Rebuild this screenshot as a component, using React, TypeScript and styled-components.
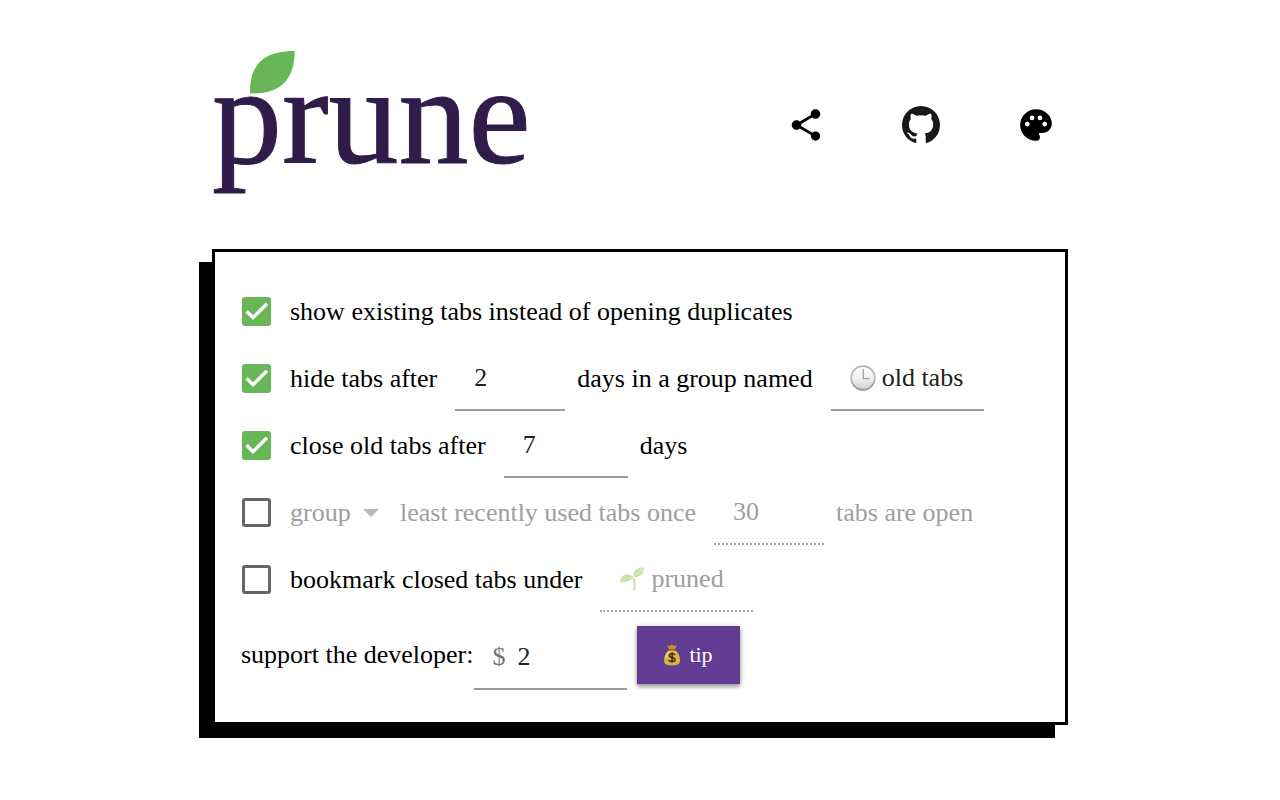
import React, { useState } from 'react';
import styled, { createGlobalStyle } from 'styled-components';

const GlobalStyle = createGlobalStyle`
  * { box-sizing: border-box; }
  body {
    margin: 0;
    background: #fff;
    color: #000;
    font-family: 'Liberation Serif', 'Times New Roman', serif;
    font-size: 26px;
    line-height: 30px;
  }
  input, select, button { font: inherit; color: inherit; }
`;

const Page = styled.div`
  max-width: 904px;
  margin: 0 auto;
  padding: 0 24px 64px;
`;

const Header = styled.header`
  display: flex;
  align-items: center;
  justify-content: space-between;
  padding: 50px 0;
`;

const Logo = styled.svg`
  display: block;
  width: 324px;
  height: 149px;
  overflow: visible;
`;

const Actions = styled.nav`
  display: flex;
  gap: 51px;
`;

const actionStyle = `
  display: flex;
  align-items: center;
  justify-content: center;
  width: 64px;
  height: 64px;
  padding: 0;
  border: 0;
  background: none;
  cursor: pointer;
`;

const ActionButton = styled.button`${actionStyle}`;
const ActionLink = styled.a`${actionStyle}`;

const ActionIcon = styled.svg`
  display: block;
  width: 38px;
  height: 38px;
`;

const Card = styled.main`
  border: 3px solid #000;
  box-shadow: -13px 13px 0 #000;
  padding: 26px 26px 38px;
`;

const Row = styled.div<{ $muted?: boolean }>`
  display: flex;
  align-items: center;
  height: 67px;
  white-space: nowrap;
  color: ${(p) => (p.$muted ? '#9e9e9e' : '#000')};
`;

const SupportRow = styled(Row)`
  height: 58px;
  margin-top: 13px;
`;

const CheckWrap = styled.span`
  position: relative;
  flex: none;
  width: 29px;
  height: 29px;
  margin: 0 19px 0 1px;
`;

const CheckInput = styled.input`
  appearance: none;
  display: block;
  width: 29px;
  height: 29px;
  margin: 0;
  border: 3px solid #666;
  border-radius: 3px;
  cursor: pointer;
  &:checked {
    background: #68b658;
    border-color: #68b658;
  }
`;

const CheckMark = styled.svg`
  position: absolute;
  inset: 0;
  width: 29px;
  height: 29px;
  pointer-events: none;
`;

const Field = styled.span<{ $width: number; $disabled?: boolean }>`
  display: flex;
  align-items: center;
  flex: none;
  width: ${(p) => p.$width}px;
  height: 64px;
  margin: 0 12px 0 18px;
  padding-left: 19px;
  border-bottom: ${(p) => (p.$disabled ? '2px dotted #a6a6a6' : '2px solid #9e9e9e')};
  color: ${(p) => (p.$disabled ? '#9e9e9e' : '#212121')};
`;

const TipField = styled(Field)`
  margin: 6px 10px 0 0;
`;

const FieldInput = styled.input`
  flex: 1;
  min-width: 0;
  width: 100%;
  height: 30px;
  padding: 0;
  border: 0;
  outline: 0;
  background: none;
  &:disabled { color: #9e9e9e; }
`;

const Prefix = styled.span`
  margin-right: 12px;
  color: #757575;
`;

const Emoji = styled.svg<{ $faded?: boolean }>`
  display: block;
  flex: none;
  width: 26px;
  height: 26px;
  margin-right: 6px;
  opacity: ${(p) => (p.$faded ? 0.45 : 1)};
`;

const SelectWrap = styled.span`
  display: flex;
  align-items: center;
  margin-right: 21px;
`;

const Select = styled.select`
  appearance: none;
  height: 30px;
  margin: 0 -16px 0 0;
  padding: 0 28px 0 0;
  border: 0;
  background: none;
  opacity: 1;
  &:disabled { color: #9e9e9e; opacity: 1; }
`;

const Caret = styled.svg`
  display: block;
  width: 16px;
  height: 8px;
  pointer-events: none;
`;

const TipButton = styled.button`
  display: flex;
  align-items: center;
  justify-content: center;
  width: 103px;
  height: 58px;
  padding: 0;
  border: 0;
  background: #613c90;
  color: #fff;
  font-size: 22px;
  box-shadow: 0 3px 4px rgba(0, 0, 0, 0.3), 0 1px 6px rgba(0, 0, 0, 0.2);
  cursor: pointer;
`;

const MoneyIcon = styled.svg`
  display: block;
  width: 18px;
  height: 22px;
  margin-right: 8px;
`;

function Check({ id, initial, label }: { id: string; initial?: boolean; label?: string }) {
  const [on, setOn] = useState(!!initial);
  return (
    <CheckWrap>
      <CheckInput
        type="checkbox"
        id={id}
        aria-label={label}
        checked={on}
        onChange={(e) => setOn(e.target.checked)}
      />
      {on && (
        <CheckMark viewBox="0 0 29 29" aria-hidden="true">
          <path d="M4.6 14.2 11 20.6 25 6.8" fill="none" stroke="#fff" strokeWidth="3.4" />
        </CheckMark>
      )}
    </CheckWrap>
  );
}

const Clock = () => (
  <Emoji viewBox="0 0 26 26" aria-hidden="true">
    <defs>
      <linearGradient id="rim" x1="0" y1="0" x2="0" y2="1">
        <stop offset="0" stopColor="#aab2c0" />
        <stop offset="0.5" stopColor="#b9babd" />
        <stop offset="1" stopColor="#8d8d8d" />
      </linearGradient>
      <linearGradient id="face" x1="0" y1="0" x2="0" y2="1">
        <stop offset="0" stopColor="#fafafa" />
        <stop offset="0.5" stopColor="#f1f1f1" />
        <stop offset="1" stopColor="#cfcfcf" />
      </linearGradient>
    </defs>
    <circle cx="13" cy="13" r="11.8" fill="url(#face)" stroke="url(#rim)" strokeWidth="1.7" />
    <path d="M13.3 4v9.600h6" fill="none" stroke="#a2a2a2" strokeWidth="1.3" />
  </Emoji>
);

const Seedling = () => (
  <Emoji viewBox="0 0 26 26" aria-hidden="true" $faded>
    <path d="M14.2 11.5c1.8 4 1.7 8.5.6 13.2" fill="none" stroke="#7fbf4a" strokeWidth="1.8" />
    <path d="M14.5 10.8C7.5 6 1.8 9 1 16.5c5.5-.2 10-1.5 13.5-5.7z" fill="#74bb40" />
    <path d="M14.3 11C13.6 4.5 17.5 1.8 25.2 1.3 24.8 8.5 21 11.7 14.3 11z" fill="#82c84d" />
    <path d="M2 15.5c4-1.5 7.5-4 12-4.5 3.5-2.5 6.5-4.5 10-8.5" fill="none" stroke="#a5d977" strokeWidth="1" />
  </Emoji>
);

const MoneyBag = () => (
  <MoneyIcon viewBox="0 0 18 22" aria-hidden="true">
    <path d="M4 1.2 6.5 2 8.8.6 11.2 2 14 1.2 11.8 5.5H6.3z" fill="#c9962d" />
    <path d="M6.2 6C2.5 8.5.8 12.5 1 17c.2 3.2 2.5 4.4 8 4.4s7.8-1.2 8-4.4c.2-4.5-1.5-8.5-5.2-11z" fill="#dfb03c" />
    <path d="M3 14c.5-3.5 2-5.5 4-7" fill="none" stroke="#f3d571" strokeWidth="1.5" />
    <path d="M5.5 5.8h7" stroke="#926315" strokeWidth="1.5" />
    <path d="M12 10.8C10.5 9.4 6.3 9.3 6.3 11.6c0 2.6 5.7 1.4 5.7 4.1 0 2.3-4.5 2.3-6.3.6M9.1 8.2v10.5" fill="none" stroke="#33312c" strokeWidth="1.6" />
  </MoneyIcon>
);

export default function App() {
  return (
    <>
      <GlobalStyle />
      <Page>
        <Header>
          <Logo viewBox="0 0 324 149" role="img" aria-label="prune">
            <text
              x="0"
              y="113"
              fill="#2f1c4a"
              stroke="#2f1c4a"
              strokeWidth="1"
              fontFamily="'Liberation Serif', serif"
              fontSize="140"
            >
              prune
            </text>
            <path d="M38 43.5C37.5 16 50 1 82.7 1 82.5 30 68 44.5 38 43.5z" fill="#68b658" />
          </Logo>
          <Actions>
            <ActionButton type="button" aria-label="share">
              <ActionIcon viewBox="0 0 24 24" fill="#000">
                <path d="M18 16.08c-.76 0-1.44.3-1.96.77L8.91 12.7c.05-.23.09-.46.09-.7s-.04-.47-.09-.7l7.05-4.11c.54.5 1.25.81 2.04.81 1.66 0 3-1.34 3-3s-1.34-3-3-3-3 1.34-3 3c0 .24.04.47.09.7L8.04 9.81C7.5 9.31 6.79 9 6 9c-1.66 0-3 1.34-3 3s1.34 3 3 3c.79 0 1.5-.31 2.04-.81l7.12 4.16c-.05.21-.08.43-.08.65 0 1.61 1.31 2.92 2.92 2.92s2.92-1.31 2.92-2.92-1.31-2.92-2.92-2.92z" />
              </ActionIcon>
            </ActionButton>
            <ActionLink href="#github" aria-label="github">
              <ActionIcon viewBox="0 0 16 16" fill="#191717">
                <path d="M8 0C3.58 0 0 3.58 0 8c0 3.54 2.29 6.53 5.47 7.59.4.07.55-.17.55-.38 0-.19-.01-.82-.01-1.49-2.01.37-2.53-.49-2.69-.94-.09-.23-.48-.94-.82-1.13-.28-.15-.68-.52-.01-.53.63-.01 1.08.58 1.23.82.72 1.21 1.87.87 2.33.66.07-.52.28-.87.51-1.07-1.78-.2-3.64-.89-3.64-3.95 0-.87.31-1.59.82-2.15-.08-.2-.36-1.02.08-2.12 0 0 .67-.21 2.2.82.64-.18 1.32-.27 2-.27s1.36.09 2 .27c1.53-1.04 2.2-.82 2.2-.82.44 1.1.16 1.92.08 2.12.51.56.82 1.27.82 2.15 0 3.07-1.87 3.75-3.65 3.95.29.25.54.73.54 1.48 0 1.07-.01 1.93-.01 2.2 0 .21.15.46.55.38A8.01 8.01 0 0 0 16 8c0-4.42-3.58-8-8-8z" />
              </ActionIcon>
            </ActionLink>
            <ActionButton type="button" aria-label="theme">
              <ActionIcon viewBox="0 0 24 24" fill="#000">
                <path d="M12 2C6.49 2 2 6.49 2 12s4.49 10 10 10a2.5 2.5 0 0 0 2.5-2.5c0-.61-.23-1.2-.64-1.67a.528.528 0 0 1-.13-.33c0-.28.22-.5.5-.5H16c3.31 0 6-2.69 6-6 0-4.96-4.49-9-10-9zm5.5 11a1.5 1.5 0 1 1 0-3 1.5 1.5 0 0 1 0 3zm-3-4a1.5 1.5 0 1 1 0-3 1.5 1.5 0 0 1 0 3zM5 11.5a1.5 1.5 0 1 1 3 0 1.5 1.5 0 0 1-3 0zm6-4a1.5 1.5 0 1 1-3 0 1.5 1.5 0 0 1 3 0z" />
              </ActionIcon>
            </ActionButton>
          </Actions>
        </Header>

        <Card>
          <Row>
            <Check id="dedupe" initial />
            <label htmlFor="dedupe">show existing tabs instead of opening duplicates</label>
          </Row>
          <Row>
            <Check id="hide" initial />
            <label htmlFor="hide">hide tabs after</label>
            <Field $width={110}>
              <FieldInput aria-label="days before hiding" defaultValue="2" />
            </Field>
            <label htmlFor="group-name">days in a group named</label>
            <Field $width={153}>
              <Clock />
              <FieldInput id="group-name" defaultValue="old tabs" />
            </Field>
          </Row>
          <Row>
            <Check id="close" initial />
            <label htmlFor="close">close old tabs after</label>
            <Field $width={124}>
              <FieldInput id="close-days" defaultValue="7" />
            </Field>
            <label htmlFor="close-days">days</label>
          </Row>
          <Row $muted>
            <Check id="lru" label="limit open tabs" />
            <SelectWrap>
              <Select aria-label="action" disabled defaultValue="group">
                <option value="group">group</option>
                <option value="close">close</option>
              </Select>
              <Caret viewBox="0 0 16 8" aria-hidden="true">
                <path d="M0 0h16L8 8z" fill="#b8b8b8" />
              </Caret>
            </SelectWrap>
            <label htmlFor="lru">least recently used tabs once</label>
            <Field $width={110} $disabled>
              <FieldInput id="lru-count" defaultValue="30" disabled />
            </Field>
            <label htmlFor="lru-count">tabs are open</label>
          </Row>
          <Row>
            <Check id="bookmark" />
            <label htmlFor="bookmark">bookmark closed tabs under</label>
            <Field $width={153} $disabled>
              <Seedling />
              <FieldInput aria-label="bookmark folder" defaultValue="pruned" disabled />
            </Field>
          </Row>
          <SupportRow>
            <label htmlFor="amount">support the developer:</label>
            <TipField $width={153}>
              <Prefix>$</Prefix>
              <FieldInput id="amount" defaultValue="2" />
            </TipField>
            <TipButton type="button">
              <MoneyBag />
              tip
            </TipButton>
          </SupportRow>
        </Card>
      </Page>
    </>
  );
}
